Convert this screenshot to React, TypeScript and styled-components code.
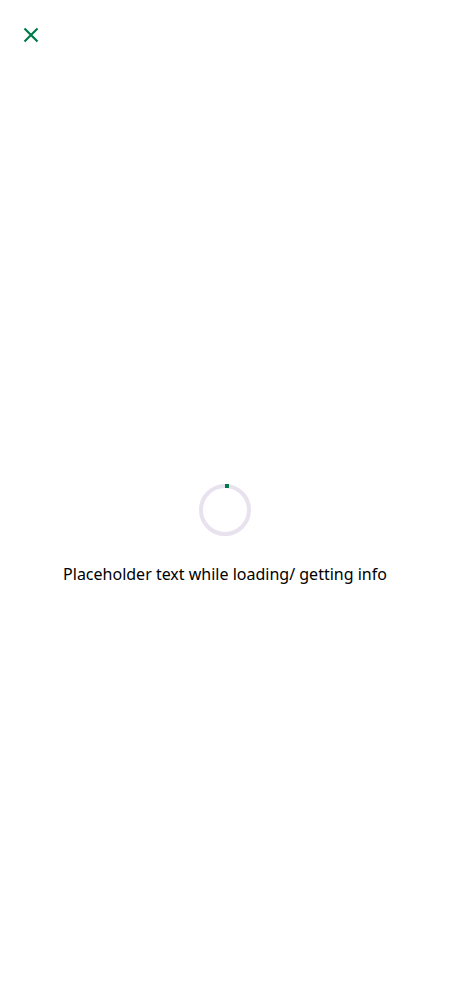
import React from "react";
import styled, { createGlobalStyle } from "styled-components";

const Global = createGlobalStyle`
  html, body { margin: 0; padding: 0; background: #ffffff; }
  body { font-family: "Noto Sans", "Open Sans", sans-serif; color: #000; }
`;

const Page = styled.div`
  width: 450px;
  height: 1000px;
  display: flex;
  flex-direction: column;
`;

const Header = styled.div`
  display: flex;
  align-items: center;
  padding: 24px 0 0 20px;
  height: 22px;
`;

const CloseButton = styled.button`
  width: 22px;
  height: 22px;
  padding: 0;
  border: none;
  background: none;
  display: flex;
  align-items: center;
  justify-content: center;
  cursor: pointer;
`;

const Body = styled.div`
  flex: 1;
  display: flex;
  flex-direction: column;
  align-items: center;
  padding-top: 436px;
`;

const Spinner = styled.svg`
  width: 56px;
  height: 56px;
  display: block;
`;

const Message = styled.p`
  margin: 24px 0 0;
  font-size: 16px;
  line-height: 24px;
  color: #000;
`;

export default function App() {
  return (
    <Page>
      <Global />
      <Header>
        <CloseButton aria-label="Close">
          <svg width="16" height="16" viewBox="0 0 16 16">
            <path d="M1.5 1.5 L14.5 14.5 M14.5 1.5 L1.5 14.5" stroke="#007a48" strokeWidth="2.2" fill="none" />
          </svg>
        </CloseButton>
      </Header>
      <Body>
        <Spinner viewBox="0 0 56 56">
          <circle cx="28" cy="28" r="24" fill="none" stroke="#e7e2ee" strokeWidth="4" />
          <rect x="28" y="2" width="4" height="4" fill="#007a48" />
        </Spinner>
        <Message>Placeholder text while loading/ getting info</Message>
      </Body>
    </Page>
  );
}
